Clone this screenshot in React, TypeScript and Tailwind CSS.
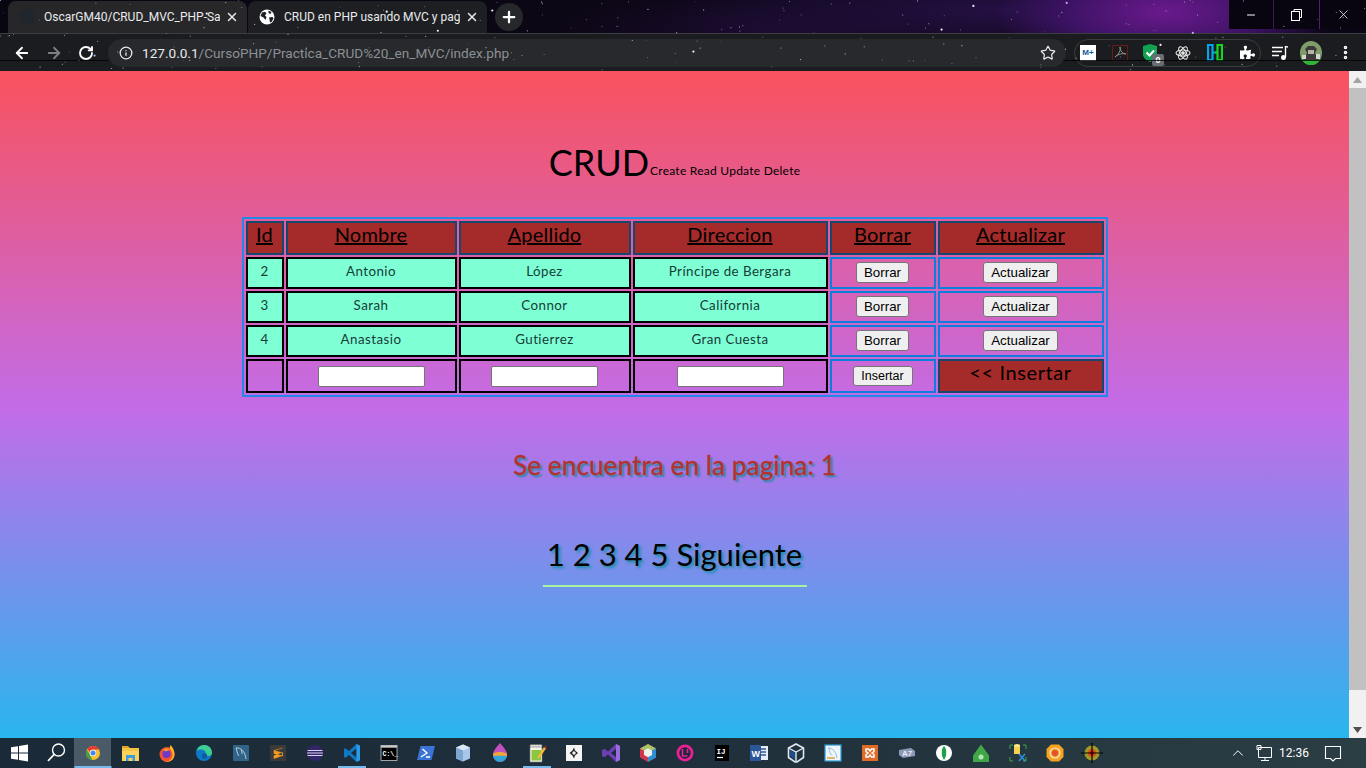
import React from "react";
import { ArrowLeft, ArrowRight, RotateCw, Info, Star, X, Plus, Minus, ChevronUp, MoreVertical } from "lucide-react";
import { FaPuzzlePiece } from "react-icons/fa";

const stars = Array.from({ length: 190 }, (_, i) => {
  const x = (i * 367.31 + (i * i * 13.7) % 211) % 1366;
  const y = (i * 29.17 + (i * i * 3.3) % 31) % 70;
  const big = i % 17 === 0;
  return { x, y, r: big ? 1.1 : 0.6, o: big ? 0.95 : 0.25 + ((i * 7) % 10) / 20, c: i % 5 === 0 ? "#c9a6ff" : i % 7 === 0 ? "#9ec5ff" : "#ffffff" };
});

function Icon({ children }: { children: React.ReactNode }) {
  return <svg width="24" height="24" viewBox="0 0 24 24">{children}</svg>;
}

const taskIcons: React.ReactNode[] = [
  <Icon><path d="M4 6.2l7-1v6.3H4zM12 5l9-1.400v7.900h-9zM4 12.500h7v6.300l-7-1zM12 12.500h9v8l-9-1.400z" fill="#fff" /></Icon>,
  <Icon><circle cx="14.500" cy="9" r="6" fill="none" stroke="#fff" strokeWidth="1.400" /><path d="M10.200 13.400L4 20" stroke="#fff" strokeWidth="1.800" /></Icon>,
  <Icon><circle cx="12" cy="12" r="7" fill="#fbc02d" /><path d="M12 5a7 7 0 0 1 6.100 3.500H12a3.500 3.500 0 0 0-3.300 2.400L6.200 7.700A7 7 0 0 1 12 5z" fill="#e53935" /><path d="M5.900 8.400l3 5.400 2.600 5.100A7 7 0 0 1 5.900 8.400z" fill="#43a047" /><circle cx="12" cy="12" r="3.200" fill="#fff" /><circle cx="12" cy="12" r="2.500" fill="#4285f4" /></Icon>,
  <Icon><path d="M4 5h6l2 2h-8z" fill="#e0a325" /><path d="M4 7h17v13H4z" fill="#fbd35c" /><path d="M4 7h17v3H4z" fill="#f6c445" /><path d="M8 20v-6h9v6h-2.500v-3h-4v3z" fill="#3b9be0" /></Icon>,
  <Icon><circle cx="12" cy="13.500" r="7.500" fill="#f5532d" /><path d="M19.500 13.500a7.500 7.500 0 0 1-10 7c4 .3 7.500-1.500 8-6 .3-2-1-5-2.500-6.500-.3-1.500 0-3 .5-4 2 2 4 5 4 9.500z" fill="#fdb32a" /><circle cx="11.500" cy="13" r="4" fill="#6c3bc9" /><path d="M8 9c2-2 5-2 7 0-1.500 0-3 .5-3.500 1.500z" fill="#ff9a2e" /></Icon>,
  <Icon><circle cx="12" cy="12" r="8" fill="#0f79c9" /><path d="M4.500 10C6 5 11 3 15 4.500c3.500 1.300 5 4.500 5 7.500 0 2-2 3-4 3-1.500 0-3-.5-2.500-1.500 1-2.500-1-5-4.500-5-2 0-4 .5-4.500 1.500z" fill="#3ccf8e" /><circle cx="12.500" cy="15" r="2.700" fill="#0d5c9e" /></Icon>,
  <Icon><rect x="4" y="4" width="16" height="16" rx="1" fill="#2f6488" /><path d="M7 7c5-.5 9 3 10 11M7 7c1 2 1 6 3 8M12 9c1 1 1 3 1 4" fill="none" stroke="#c6d6e0" strokeWidth=".9" /></Icon>,
  <Icon><rect x="4" y="4" width="16" height="16" fill="#3a3a3a" /><path d="M16.500 7L8 9.500v3l8.500 2.500v-3L8 9.500M16.500 11.500v3L8 17.500v-3" fill="#f79a1e" stroke="#f79a1e" strokeWidth=".6" /></Icon>,
  <Icon><circle cx="12" cy="12" r="8" fill="#33266b" /><path d="M4.500 9.500h15M4 12h16M4.500 14.500h15" stroke="#d8d2f0" strokeWidth="1.200" /></Icon>,
  <Icon><path d="M16.500 3L20 4.800v14.400L16.500 21l-7.500-7-3.500 2.700L4 16V8l1.500-.7L9 10z" fill="#0f78c4" /><path d="M16.500 7.500v9L11 12z" fill="#1d2b38" /><path d="M16.500 3L20 4.800v14.400L16.500 21z" fill="#2a9be6" /></Icon>,
  <Icon><rect x="4" y="4.500" width="16" height="15" fill="#000" stroke="#c9c9c9" strokeWidth=".8" /><rect x="4" y="4.500" width="16" height="2.200" fill="#c9c9c9" /><text x="5.500" y="15" fill="#fff" fontSize="6.500" fontWeight="700" fontFamily="Liberation Mono, monospace">C:\_</text></Icon>,
  <Icon><path d="M6.500 5H21l-3.500 14H3z" fill="#3c74d6" /><path d="M8.500 8l4.500 4-6 4M12 16h4" fill="none" stroke="#fff" strokeWidth="1.400" /></Icon>,
  <Icon><path d="M12 3.500l7 3v11l-7 3-7-3v-11z" fill="#a7c8ea" /><path d="M12 3.500l7 3-7 3-7-3z" fill="#d8e8f6" /><path d="M12 9.500v11l-7-3v-11z" fill="#7fa6cf" /></Icon>,
  <Icon><path d="M12 2c4 4.500 7 8 7 12a7 7 0 0 1-14 0C5 10 8 6.500 12 2z" fill="#c44fc0" /><path d="M5.200 12.500c3-2 10-2 13.600 0a7 7 0 0 1 .2 2.500H5z" fill="#f2a43c" /><path d="M5.100 15c3-.5 10.500-.5 13.800 0A7 7 0 0 1 5.100 15z" fill="#2fa8d8" /></Icon>,
  <Icon><path d="M5 4h12v17H5z" fill="#f4f4e8" stroke="#777" strokeWidth=".6" /><path d="M5 3.500h12v2.500H5z" fill="#ddd" stroke="#333" strokeDasharray="1 .6" strokeWidth=".6" /><path d="M6.500 9h9.500v10.500H6.500z" fill="#8cc63f" /><path d="M13 15l6-9 2 1.500-6 9-2.500 1z" fill="#f2b632" /><path d="M19 6l1-1.500 2 1.500-1 1.500z" fill="#a3271f" /></Icon>,
  <Icon><rect x="4" y="4" width="16" height="16" fill="#f4f4f4" /><path d="M12 6.500l1 3 3 2.500-3 2.500-1 3-1.500-3-3-2.500 3-2.500z" fill="#222" /><circle cx="12" cy="12" r="1.700" fill="#f4f4f4" /></Icon>,
  <Icon><path d="M17 3l4 2v14l-4 2-8-7.500-3.500 2.700L3 15V9l2.500-1.200L9 10.500z" fill="#6d3fb5" /><path d="M17 8v8l-5-4z" fill="#1d2b38" /><path d="M17 3l4 2v14l-4 2z" fill="#9a6bdc" /></Icon>,
  <Icon><path d="M12 3l8 4.500v9L12 21l-8-4.500v-9z" fill="#d0354e" /><path d="M12 3l8 4.500L12 12 4 7.500z" fill="#a6c46a" /><path d="M12 12l8-4.500v9L12 21z" fill="#2e8ed6" /><path d="M8 9.500l4-2.300 4 2.300v4.500l-4 2.300-4-2.300z" fill="#f1efe6" /></Icon>,
  <Icon><circle cx="12" cy="12" r="8.500" fill="#ec1f96" /><circle cx="12" cy="12" r="5.700" fill="#1d2b38" /><path d="M9.500 8v7h5M14.500 8v4" fill="none" stroke="#ec1f96" strokeWidth="1.600" /></Icon>,
  <Icon><rect x="5" y="4" width="14" height="16" fill="#000" /><text x="6.500" y="12.500" fill="#fff" fontSize="7.500" fontWeight="700" fontFamily="Liberation Mono, monospace">IJ</text><path d="M7 16.500h6" stroke="#fff" strokeWidth="1.200" /></Icon>,
  <Icon><rect x="11" y="5" width="10" height="14" fill="#e8eef7" /><path d="M13 8h6M13 11h6M13 14h6" stroke="#2b579a" strokeWidth="1.400" /><rect x="3" y="4" width="11" height="16" fill="#2b579a" /><text x="4.600" y="15.500" fill="#fff" fontSize="9" fontWeight="700" fontFamily="Liberation Sans, sans-serif">W</text></Icon>,
  <Icon><path d="M12 3l7.500 4v9.500L13 21h-2l-6.500-4.500V7z" fill="none" stroke="#dfe7f3" strokeWidth="1.600" /><path d="M4.500 7l7.500 4 7.500-4M12 11v10" fill="none" stroke="#dfe7f3" strokeWidth="1.400" /><path d="M6 9l5 3v6.500l-5-3.500z" fill="#1c4c8a" /></Icon>,
  <Icon><rect x="4" y="4" width="16" height="16" fill="#eef6fb" stroke="#2a9ad6" strokeWidth="1.200" /><path d="M7 7c5 0 8 4 9 10M8 7.500c.5 3 1 5 3 7" fill="none" stroke="#8ab6d4" strokeWidth=".9" /><path d="M6 17h8" stroke="#e3a44a" strokeWidth="1.600" /></Icon>,
  <Icon><rect x="4" y="4" width="16" height="16" fill="#e06a26" /><path d="M8 8h2.500L12 10l1.500-2H16v2.500L14 12l2 1.500V16h-2.500L12 14l-1.500 2H8v-2.500l2-1.500-2-1.500z" fill="none" stroke="#fff" strokeWidth="1.500" /></Icon>,
  <Icon><path d="M4 9l12-2 4 3v5l-12 2-4-3z" fill="#8e98b8" /><text x="7" y="15" fill="#e8ecf5" fontSize="8" fontWeight="700" fontFamily="Liberation Sans, sans-serif">A7</text></Icon>,
  <Icon><circle cx="12" cy="12" r="8" fill="#fff" /><path d="M12 5c3 2.500 3 10 0 14-3-4-3-11.500 0-14z" fill="#1f9e4b" /></Icon>,
  <Icon><path d="M12 3.500l8 11V21H4v-6.500z" fill="#3fa845" /><circle cx="12" cy="16" r="2.500" fill="#b9e3bb" /></Icon>,
  <Icon><path d="M8 4h6v9H8z" fill="#f2d24f" /><ellipse cx="11" cy="4.500" rx="3" ry="1.500" fill="#fbe98a" /><path d="M4 8V4h3M20 8V4h-3M4 16v4h3M20 16v4h-3" fill="none" stroke="#3fa845" strokeWidth="1" /><path d="M13 20l6-7M13 13l6 7" stroke="#2a8fdc" strokeWidth="1.600" /></Icon>,
  <Icon><path d="M8 3.500h8l4.500 4.500v8L16 20.500H8L3.500 16V8z" fill="#f5a21d" /><circle cx="12" cy="12" r="5" fill="none" stroke="#f4e3d8" strokeWidth="1.200" /><circle cx="12" cy="12" r="3" fill="#e2512b" /></Icon>,
  <Icon><circle cx="12" cy="12" r="7.500" fill="#a29a25" /><circle cx="12" cy="12" r="4" fill="#d94a1c" /><circle cx="12" cy="12" r="2" fill="#e00000" /><path d="M1 12h22M12 2v20" stroke="#000" strokeWidth="1.200" /></Icon>,
];

const active: Record<number, string> = { 2: "w-full bg-[#76b9ed]", 9: "w-[28px] bg-[#76b9ed]", 14: "w-[28px] bg-[#76b9ed]" };

function Tab({ title, active: on, globe }: { title: string; active?: boolean; globe?: boolean }) {
  return (
    <div className={`relative flex h-[32px] w-[239px] items-center rounded-t-[8px] pl-[11px] pr-[8px] ${on ? "bg-[#1d1f22]" : "bg-[#2b2b2d]/90"}`}>
      <div className="flex h-[16px] w-[16px] shrink-0 items-center justify-center">
        {globe ? (
          <svg width="16" height="16" viewBox="0 0 16 16">
            <circle cx="8" cy="8" r="7.500" fill="#fff" />
            <path d="M3 3.500l3-.8 1.500 1.500L6 6.500 7.500 8 6.500 11 4.500 8.500 1.500 7zM9.500 1.500l3 1.500-1 2-2-1zM10 8.500l3.500-.5 1 1.500-2 3.500-1.500.5-.5-3z" fill="#1d1f22" />
          </svg>
        ) : (
          <div className="h-[16px] w-[16px] rounded-full bg-[#20262c]" />
        )}
      </div>
      <div className="ml-[9px] w-[176px] overflow-hidden whitespace-nowrap font-['Roboto',sans-serif] text-[12px] leading-[16px] text-[#e8eaed]">{title}</div>
      <X size={14} color="#e8eaed" strokeWidth={2.500} className="ml-[5px] shrink-0" />
    </div>
  );
}

function Th({ children, w }: { children: React.ReactNode; w: string }) {
  return <th className={`${w} h-[34px] border-2 border-[#17466f] bg-[#a52a2a] p-0 pb-[8px] text-center align-middle text-[20px] font-normal leading-[20px] tracking-[0.2px] text-black underline`}>{children}</th>;
}
function Td({ children }: { children: React.ReactNode }) {
  return <td className="h-[32px] border-2 border-black bg-[#7fffd4] p-0 pb-[5px] text-center align-middle text-[13.330px] leading-[16px] tracking-[0.45px] text-[#143c38]">{children}</td>;
}
function BtnCell({ label }: { label: string }) {
  return (
    <td className="h-[32px] border-2 border-[#0c7fdc] p-0 pb-[2px] text-center align-middle text-[0px] leading-[0px]">
      <button className="h-[21px] rounded-[3px] border border-[#767676] bg-[#efefef] px-[7px] font-['Liberation_Sans',sans-serif] text-[13.330px] leading-[15px] text-black">{label}</button>
    </td>
  );
}
function InputCell() {
  return (
    <td className="h-[34px] border-2 border-black p-0 text-center align-middle text-[0px] leading-[0px]">
      <input className="h-[21px] w-[107px] rounded-[2px] border border-[#767676] bg-white align-middle" readOnly />
    </td>
  );
}

const rows = [
  ["2", "Antonio", "López", "Príncipe de Bergara"],
  ["3", "Sarah", "Connor", "California"],
  ["4", "Anastasio", "Gutierrez", "Gran Cuesta"],
];

export default function App() {
  return (
    <div className="flex h-[768px] w-[1366px] flex-col overflow-hidden bg-[#1d2b38] font-['Lato',sans-serif]">
      <header className="relative h-[71px] shrink-0 bg-[#07040f]">
        <div className="h-[33px] bg-[radial-gradient(ellipse_170px_60px_at_1165px_12px,#6a1a8c_0%,#3f1367_55%,transparent_100%),radial-gradient(ellipse_330px_50px_at_1000px_10px,#241043_0%,transparent_100%),radial-gradient(ellipse_200px_40px_at_760px_30px,#1a0b2e_0%,transparent_100%),linear-gradient(90deg,#080611,#0d0716_50%,#0c0518)]">
          <div className="flex h-[33px] items-end pl-[8px]">
            <Tab title="OscarGM40/CRUD_MVC_PHP-Sa" />
            <div className="w-[1px]" />
            <Tab title="CRUD en PHP usando MVC y pag" active globe />
            <div className="ml-[8px] mb-[2px] flex h-[28px] w-[28px] items-center justify-center self-end rounded-full bg-[#26272a]">
              <Plus size={18} color="#fff" strokeWidth={3} />
            </div>
            <div className="ml-auto flex h-[29px] self-start bg-[#090510]">
              <div className="flex w-[45px] items-center justify-center border-r border-[#3a1a55]"><Minus size={12} color="#fff" /></div>
              <div className="flex w-[46px] items-center justify-center border-r border-[#4f1f74]">
                <svg width="11" height="12" viewBox="0 0 11 12" fill="none" stroke="#fff"><path d="M3 2.500V.5h7.500v8H8.500" /><rect x=".5" y="2.500" width="8" height="9" /></svg>
              </div>
              <div className="flex w-[46px] items-center justify-center"><X size={15} color="#fff" strokeWidth={1.200} /></div>
            </div>
          </div>
        </div>
        <div className="flex h-[38px] items-center border-t border-[#3c3d40] bg-[#1b1c1f]">
          <div className="flex w-[108px] shrink-0 items-center pl-[13px]">
            <ArrowLeft size={18} color="#fff" strokeWidth={2.400} />
            <ArrowRight size={18} color="#7d7f83" strokeWidth={2.400} className="ml-[14px]" />
            <RotateCw size={16} color="#fff" strokeWidth={2.800} className="ml-[15px]" />
          </div>
          <div className="flex h-[28px] w-[958px] shrink-0 items-center rounded-full bg-[#27292c] pl-[11px] pr-[10px]">
            <Info size={14} color="#e8eaed" strokeWidth={2.200} />
            <div className="ml-[9px] font-['Roboto',sans-serif] text-[13.600px] leading-[18px] text-[#8b9094]">
              <span className="text-[#e8eaed]">127.0.0.1</span>/CursoPHP/Practica_CRUD%20_en_MVC/index.php
            </div>
            <Star size={16} color="#e8eaed" strokeWidth={1.800} className="ml-auto" />
          </div>
          <div className="ml-[8px] flex h-[28px] w-[187px] shrink-0 items-center rounded-full border border-[#3c3d40] pl-[5px]">
            <div className="flex h-[16px] w-[16px] items-center justify-center bg-white font-['Liberation_Sans',sans-serif] text-[8px] font-bold leading-[16px] text-[#0b5a9e]">M+</div>
            <div className="ml-[16px] flex h-[16px] w-[16px] items-center justify-center border border-[#6b1a14]">
              <svg width="13" height="13" viewBox="0 0 13 13" fill="none" stroke="#9a8f8e" strokeWidth="1"><path d="M6 1c1 3-1 7-5 10 3-3 8-4 11-3-3 0-6-3-6-7z" /></svg>
            </div>
            <div className="relative ml-[15px] h-[18px] w-[16px]">
              <svg width="16" height="18" viewBox="0 0 16 18"><path d="M0 2l7-2 7 2v8c0 4-3 6-7 8-4-2-7-4-7-8z" fill="#12a150" /><path d="M3.500 8.500l3 3 4.500-5" stroke="#fff" strokeWidth="2" fill="none" /></svg>
              <div className="absolute left-[9px] top-[10px] flex h-[12px] w-[12px] items-center justify-center rounded-[2px] bg-[#6a6d74] font-['Liberation_Sans',sans-serif] text-[9px] font-bold leading-[12px] text-white">0</div>
            </div>
            <div className="ml-[16px]">
              <svg width="16" height="16" viewBox="0 0 16 16" fill="none" stroke="#e8e8e8" strokeWidth="1.100"><ellipse cx="8" cy="8" rx="7" ry="3" /><ellipse cx="8" cy="8" rx="7" ry="3" transform="rotate(60 8 8)" /><ellipse cx="8" cy="8" rx="7" ry="3" transform="rotate(120 8 8)" /><circle cx="8" cy="8" r="1.300" fill="#e8e8e8" /></svg>
            </div>
            <div className="ml-[16px]">
              <svg width="16" height="17" viewBox="0 0 16 17" fill="none" strokeWidth="2.200"><path d="M1 1h4.500v15H1zM5.500 8.500h3" stroke="#00a7f0" /><path d="M15 1h-4.500v15H15zM8 8.500h3" stroke="#14d81e" /></svg>
            </div>
            <div className="ml-[17px]"><FaPuzzlePiece size={15} color="#fff" /></div>
          </div>
          <div className="ml-[11px] shrink-0">
            <svg width="16" height="16" viewBox="0 0 16 16" fill="none" stroke="#fff" strokeWidth="1.400"><path d="M0 2.500h11M0 6.500h10M0 10.500h7" /><path d="M13.500 1v11" /><path d="M13.500 1c.5 1 1.500 1 2.500 1" /><circle cx="11.500" cy="12.500" r="1.800" fill="#fff" /></svg>
          </div>
          <div className="ml-[12px] shrink-0">
            <svg width="22" height="24" viewBox="0 0 22 24">
              <defs><clipPath id="av"><ellipse cx="11" cy="12" rx="11" ry="12" /></clipPath></defs>
              <g clipPath="url(#av)">
                <rect width="22" height="24" fill="#7f9d6a" />
                <rect y="18" width="22" height="6" fill="#2fb53a" />
                <path d="M5 8l3-3h6l3 3-2 4 4 7H3l4-7z" fill="#3c3a38" />
                <path d="M8 9h6v4H8z" fill="#b9b2a6" />
                <path d="M2 14h4v4H2zM16 13h4v5h-4z" fill="#d4d6cf" />
              </g>
            </svg>
          </div>
          <MoreVertical size={17} color="#fff" strokeWidth={3} className="ml-[15px] shrink-0" />
        </div>
        <svg className="pointer-events-none absolute left-0 top-0" width="1366" height="71">
          <path d="M0 60.500h108M1063 60.500h303" stroke="#000" strokeWidth="1" opacity=".8" />
          {stars.map((s, i) => <circle key={i} cx={s.x} cy={s.y} r={s.r} fill={s.c} opacity={s.o} />)}
        </svg>
      </header>

      <div className="flex h-[667px] shrink-0">
        <main className="h-full w-[1349px] overflow-hidden bg-[linear-gradient(180deg,#f9525d_0%,#c26ce9_51%,#29b6ee_100%)] text-center text-black">
          <div className="mt-[70px] flex h-[42px] items-end justify-center">
            <span className="text-[36px] leading-[42px]">CRUD</span>
            <span className="ml-[1px] pb-[5px] text-[12px] leading-[14px] tracking-[0.25px]">Create Read Update Delete</span>
          </div>
          <table className="mx-auto mt-[35px] w-[864px] table-fixed border-separate border-spacing-[2px] border border-[#1a8cf0] shadow-[0_0_0_1px_#2a86e0]">
            <thead>
              <tr>
                <Th w="w-[38px]">Id</Th>
                <Th w="w-[171px]">Nombre</Th>
                <Th w="w-[172px]">Apellido</Th>
                <Th w="w-[195px]">Direccion</Th>
                <Th w="w-[106px]">Borrar</Th>
                <Th w="w-[166px]">Actualizar</Th>
              </tr>
            </thead>
            <tbody>
              {rows.map((r) => (
                <tr key={r[0]}>
                  {r.map((c) => <Td key={c}>{c}</Td>)}
                  <BtnCell label="Borrar" />
                  <BtnCell label="Actualizar" />
                </tr>
              ))}
              <tr>
                <td className="h-[34px] border-2 border-black p-0" />
                <InputCell />
                <InputCell />
                <InputCell />
                <td className="h-[34px] border-2 border-[#0c7fdc] p-0 text-center align-middle text-[0px] leading-[0px]">
                  <button className="h-[20px] w-[60px] rounded-[3px] border border-[#767676] bg-[#efefef] p-0 font-['Liberation_Sans',sans-serif] text-[12.500px] leading-[14px] text-black">Insertar</button>
                </td>
                <td className="h-[34px] border-2 border-[#17466f] bg-[#a52a2a] p-0 pb-[8px] text-center align-middle text-[20px] leading-[20px] tracking-[0.6px] text-black">&lt;&lt; Insertar</td>
              </tr>
            </tbody>
          </table>
          <div className="mt-[53px] whitespace-nowrap text-[26.300px] leading-[32px] text-[#b5312c] [-webkit-text-stroke:0.3px_#b5312c] [text-shadow:2px_2px_2px_#1a8a9c]">Se encuentra en la pagina: 1</div>
          <div className="mx-auto mt-[53px] w-[264px] whitespace-nowrap border-b-2 border-[#a6f29e] pb-[11px] text-[31px] leading-[40px] text-black [text-shadow:2px_2px_3px_#128da0]">
            1 2 3 4 5 Siguiente
          </div>
        </main>
        <aside className="flex w-[17px] shrink-0 flex-col bg-[#f1f1f1]">
          <div className="flex h-[17px] items-center justify-center">
            <svg width="9" height="6" viewBox="0 0 9 6"><path d="M4.500 0L9 6H0z" fill="#a3a3a3" /></svg>
          </div>
          <div className="h-[602px] bg-[#c1c1c1]" />
          <div className="flex-1" />
          <div className="flex h-[17px] items-center justify-center">
            <svg width="9" height="6" viewBox="0 0 9 6"><path d="M4.500 6L9 0H0z" fill="#505050" /></svg>
          </div>
        </aside>
      </div>

      <footer className="flex h-[30px] shrink-0 items-center bg-[linear-gradient(90deg,#1b2a38,#1f2f3b_50%,#2b3e44)]">
        {taskIcons.map((ic, i) => (
          <div key={i} className={`relative flex h-[30px] w-[37px] shrink-0 items-center justify-center ${i === 2 ? "bg-[#4a5a66]" : ""}`}>
            {ic}
            {active[i] && <div className={`absolute bottom-0 left-1/2 h-[2px] -translate-x-1/2 ${active[i]}`} />}
          </div>
        ))}
        <ChevronUp size={18} color="#fff" strokeWidth={1.300} className="ml-[119px] shrink-0" />
        <svg width="18" height="18" viewBox="0 0 18 18" fill="none" stroke="#fff" strokeWidth="1" className="ml-[7px] shrink-0"><path d="M4.500 3.500h13v10h-13zM3 1.500h4v4H3zM11 13.500v3M7 16.500h8" /></svg>
        <div className="ml-[6px] w-[32px] text-center font-['Roboto',sans-serif] text-[12px] leading-[16px] text-white">12:36</div>
        <svg width="18" height="18" viewBox="0 0 18 18" fill="none" stroke="#fff" strokeWidth="1.100" className="ml-[14px] shrink-0"><path d="M1.500 2.500h15v12h-5l-2.500 2.500-2.500-2.500h-5z" /></svg>
      </footer>
    </div>
  );
}
